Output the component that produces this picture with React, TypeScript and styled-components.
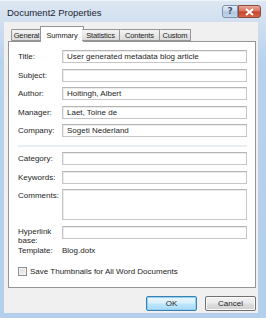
import React from 'react';
import styled, { createGlobalStyle } from 'styled-components';

const GlobalStyle = createGlobalStyle`
  html, body {
    margin: 0;
    padding: 0;
    background: #ffffff;
  }
  body {
    font-family: "Liberation Sans", Arial, sans-serif;
    font-size: 8px;
    color: #1e1e1e;
  }
`;

const Window = styled.div`
  width: 266px;
  height: 318px;
  box-sizing: border-box;
  display: flex;
  flex-direction: column;
  background: linear-gradient(180deg, #dde7f2 0px, #cfdeef 24px, #b9d2ec 60px, #b4cfeb 100%);
  border-top: 1px solid #eef3f9;
  padding: 0 8px 5px 4px;
`;

const TitleBar = styled.div`
  height: 21px;
  display: flex;
  align-items: flex-start;
  justify-content: space-between;
`;

const TitleText = styled.div`
  padding: 6px 0 0 3px;
  font-size: 9.5px;
  color: #1b2533;
`;

const Controls = styled.div`
  display: flex;
  margin-top: 4px;
  margin-right: -3px;
`;

const CaptionButton = styled.div<{ $close?: boolean }>`
  height: 13px;
  width: ${p => (p.$close ? '23px' : '16px')};
  box-sizing: border-box;
  display: flex;
  align-items: center;
  justify-content: center;
  border: 1px solid ${p => (p.$close ? '#8a4b3f' : '#7d93ad')};
  border-radius: ${p => (p.$close ? '0 3px 3px 0' : '3px 0 0 3px')};
  background: ${p =>
    p.$close
      ? 'linear-gradient(180deg, #e9a99a 0%, #d8735e 45%, #c6452c 55%, #d6654a 100%)'
      : 'linear-gradient(180deg, #e6eef7 0%, #c9d8ea 45%, #b2c7de 55%, #c3d5e9 100%)'};
`;

const HelpGlyph = styled.span`
  color: #3e5673;
  font-family: "DejaVu Sans", sans-serif;
  font-size: 9px;
  font-weight: bold;
  line-height: 1;
`;

const Body = styled.div`
  flex: 1;
  background: #f0f0f0;
  display: flex;
  flex-direction: column;
  padding: 4px 2px 0 4px;
`;

const TabRow = styled.div`
  display: flex;
  align-items: flex-end;
  height: 15px;
  padding-left: 3px;
  position: relative;
  z-index: 1;
`;

const Tab = styled.div<{ $active?: boolean; $w: number }>`
  box-sizing: border-box;
  width: ${p => p.$w}px;
  height: ${p => (p.$active ? '16px' : '12px')};
  margin: ${p => (p.$active ? '0 -2px -1px' : '0')};
  padding-top: ${p => (p.$active ? '1px' : '0')};
  display: flex;
  align-items: center;
  justify-content: center;
  font-size: 7.5px;
  letter-spacing: -0.15px;
  border: 1px solid #959595;
  border-bottom: ${p => (p.$active ? 'none' : '1px solid #959595')};
  border-left-width: ${p => (p.$active ? '1px' : '0')};
  background: ${p =>
    p.$active ? '#ffffff' : 'linear-gradient(180deg, #f5f5f5 0%, #e7e7e7 50%, #dcdcdc 100%)'};
  border-radius: 1px 1px 0 0;
  white-space: nowrap;
  &:first-child {
    border-left-width: 1px;
  }
`;

const Panel = styled.div`
  height: 247px;
  box-sizing: border-box;
  background: #ffffff;
  border: 1px solid #959595;
  padding: 8px 8px 0 9px;
  display: flex;
  flex-direction: column;
`;

const FieldGrid = styled.div`
  display: grid;
  grid-template-columns: 44px 185px;
  row-gap: 5.5px;
  align-items: start;
`;

const Label = styled.div<{ $tall?: boolean }>`
  height: 13px;
  line-height: ${p => (p.$tall ? '9px' : '13px')};
  padding-top: ${p => (p.$tall ? '1px' : '0')};
  box-sizing: border-box;
  white-space: nowrap;
`;

const Input = styled.div<{ $rows?: number }>`
  box-sizing: border-box;
  height: ${p => (p.$rows ? `${p.$rows}px` : '13px')};
  border: 1px solid #c6c6c6;
  border-top-color: #b5b5b5;
  box-shadow: inset 1px 1px 0 #ececec;
  background: #ffffff;
  padding: 0 4px;
  line-height: 11px;
  white-space: nowrap;
  overflow: hidden;
`;

const Separator = styled.div`
  grid-column: 1 / span 2;
  height: 2px;
  background: #e9eef4;
  margin: 2px 0 0;
`;

const PlainValue = styled.div`
  line-height: 13px;
`;

const CheckRow = styled.div`
  display: flex;
  align-items: center;
  gap: 3px;
  margin-top: 10px;
`;

const CheckBox = styled.div`
  width: 9px;
  height: 9px;
  box-sizing: border-box;
  border: 1px solid #8f8f8f;
  background: linear-gradient(135deg, #dcdcdc 0%, #f4f4f4 100%);
  box-shadow: inset 0 0 0 1px #f3f3f3;
`;

const ButtonRow = styled.div`
  display: flex;
  justify-content: flex-end;
  gap: 8px;
  padding-top: 8px;
`;

const Button = styled.div<{ $default?: boolean }>`
  width: 51px;
  height: 15px;
  box-sizing: border-box;
  display: flex;
  align-items: center;
  justify-content: center;
  border: 1px solid ${p => (p.$default ? '#3c7fb1' : '#707070')};
  border-radius: 2px;
  background: ${p =>
    p.$default
      ? 'linear-gradient(180deg, #eaf6fd 0%, #d9f0fc 45%, #bee6fd 55%, #a7d9f5 100%)'
      : 'linear-gradient(180deg, #f2f2f2 0%, #ebebeb 45%, #dddddd 55%, #cfcfcf 100%)'};
  box-shadow: ${p => (p.$default ? 'inset 0 0 0 1px #8fd2f5' : 'inset 0 0 0 1px #fafafa')};
`;

const fields: { label: string; value?: string }[] = [
  { label: 'Title:', value: 'User generated metadata blog article' },
  { label: 'Subject:' },
  { label: 'Author:', value: 'Hoitingh, Albert' },
  { label: 'Manager:', value: 'Laet, Toine de' },
  { label: 'Company:', value: 'Sogeti Nederland' },
];

const tabs = [
  { name: 'General', w: 31 },
  { name: 'Summary', w: 44 },
  { name: 'Statistics', w: 38 },
  { name: 'Contents', w: 40 },
  { name: 'Custom', w: 31 },
];

export default function App() {
  return (
    <>
      <GlobalStyle />
      <Window>
        <TitleBar>
          <TitleText>Document2 Properties</TitleText>
          <Controls>
            <CaptionButton>
              <HelpGlyph>?</HelpGlyph>
            </CaptionButton>
            <CaptionButton $close>
              <svg width="9" height="8" viewBox="0 0 9 8">
                <path d="M1 1 L8 7 M8 1 L1 7" stroke="#ffffff" strokeWidth="2" />
              </svg>
            </CaptionButton>
          </Controls>
        </TitleBar>
        <Body>
          <TabRow>
            {tabs.map(t => (
              <Tab key={t.name} $w={t.w} $active={t.name === 'Summary'}>
                {t.name}
              </Tab>
            ))}
          </TabRow>
          <Panel>
            <FieldGrid>
              {fields.map(f => (
                <React.Fragment key={f.label}>
                  <Label>{f.label}</Label>
                  <Input>{f.value}</Input>
                </React.Fragment>
              ))}
              <Separator />
              <Label>Category:</Label>
              <Input />
              <Label>Keywords:</Label>
              <Input />
              <Label>Comments:</Label>
              <Input $rows={31} />
              <Label $tall>
                Hyperlink
                <br />
                base:
              </Label>
              <Input />
              <Label>Template:</Label>
              <PlainValue>Blog.dotx</PlainValue>
            </FieldGrid>
            <CheckRow>
              <CheckBox />
              <span>Save Thumbnails for All Word Documents</span>
            </CheckRow>
          </Panel>
          <ButtonRow>
            <Button $default>OK</Button>
            <Button>Cancel</Button>
          </ButtonRow>
        </Body>
      </Window>
    </>
  );
}
